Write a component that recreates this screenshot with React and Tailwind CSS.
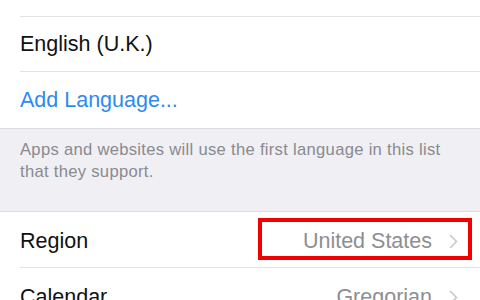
import React from "react";

function Chevron() {
  return (
    <svg width="9" height="15" viewBox="0 0 9 15" fill="none" className="shrink-0">
      <path d="M1.5 1.5 L7.5 7.5 L1.5 13.5" stroke="#c7c7cc" strokeWidth="1.6" strokeLinecap="round" strokeLinejoin="round" />
    </svg>
  );
}

export default function App() {
  const font = { fontFamily: '"Liberation Sans", Arial, sans-serif' };
  return (
    <div className="w-[480px] h-[300px] overflow-hidden bg-white" style={font}>
      <div className="flex flex-col">
        {/* cut-off row */}
        <div className="pl-5 -mt-[39px]">
          <div className="h-[56px] flex items-center border-b border-[#e3e3e6] text-[21.5px] text-[#ededed]">
            English
          </div>
        </div>
        <div className="pl-5">
          <div className="h-[55px] flex items-center pt-[1px] border-b border-[#e3e3e6] text-[21.5px] text-[#111]">
            English (U.K.)
          </div>
        </div>
        <div className="pl-5 border-b border-[#dcdce0]">
          <div className="h-[56px] flex items-center text-[21.5px] text-[#2f8af0]">
            Add Language...
          </div>
        </div>
        {/* footer */}
        <div className="h-[83px] bg-[#efeff4] border-b border-[#dcdce0] pl-5 pr-[30px] pt-[10px] text-[16.6px] tracking-[0.3px] leading-[22px] text-[#8a8a8f]">
          Apps and websites will use the first language in this list that they support.
        </div>
        {/* region */}
        <div className="relative pl-5">
          <div className="h-[56px] flex items-center justify-between pt-[3px] pr-[22px] border-b border-[#e3e3e6]">
            <span className="text-[21.5px] text-[#111]">Region</span>
            <span className="flex items-center gap-[17px]">
              <span className="text-[21.5px] text-[#8e8e93]">United States</span>
              <Chevron />
            </span>
          </div>
          <div className="absolute left-[258px] top-[6px] w-[214px] h-[42px] border-[4px] border-[#f20000]" />
        </div>
        <div className="pl-5">
          <div className="h-[56px] flex items-center justify-between pt-[3px] pr-[22px]">
            <span className="text-[21.5px] text-[#111]">Calendar</span>
            <span className="flex items-center gap-[17px]">
              <span className="text-[21.5px] text-[#8e8e93]">Gregorian</span>
              <Chevron />
            </span>
          </div>
        </div>
      </div>
    </div>
  );
}
